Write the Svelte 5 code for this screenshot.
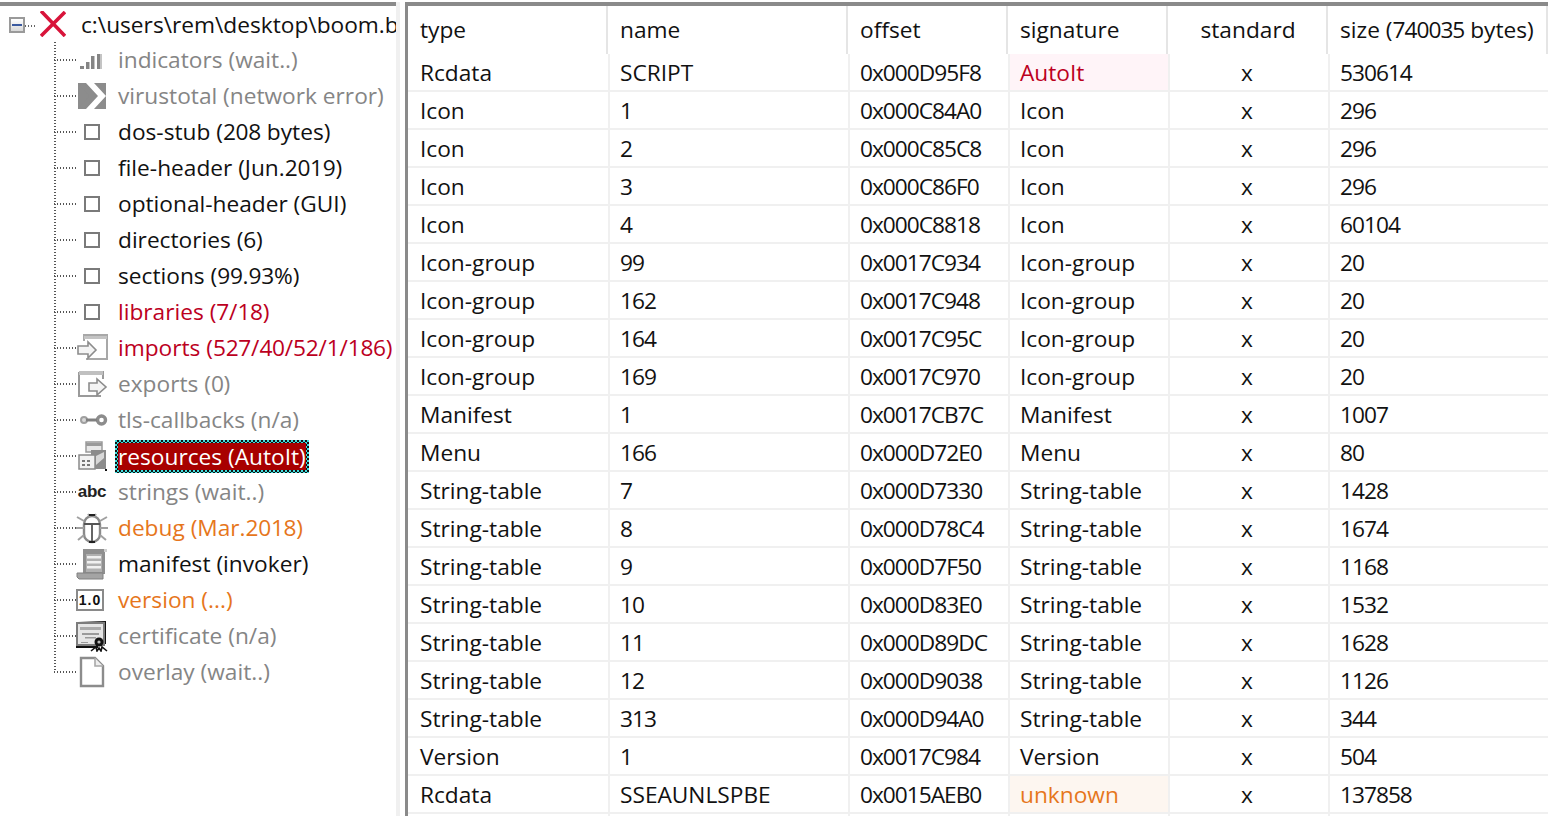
<script>
	const tree = [
		{ icon: 'bars', label: 'indicators (wait..)', tone: 'dim' },
		{ icon: 'vt', label: 'virustotal (network error)', tone: 'dim' },
		{ icon: 'box', label: 'dos-stub (208 bytes)', tone: '' },
		{ icon: 'box', label: 'file-header (Jun.2019)', tone: '' },
		{ icon: 'box', label: 'optional-header (GUI)', tone: '' },
		{ icon: 'box', label: 'directories (6)', tone: '' },
		{ icon: 'box', label: 'sections (99.93%)', tone: '' },
		{ icon: 'box', label: 'libraries (7/18)', tone: 'red' },
		{ icon: 'imports', label: 'imports (527/40/52/1/186)', tone: 'red' },
		{ icon: 'exports', label: 'exports (0)', tone: 'dim' },
		{ icon: 'key', label: 'tls-callbacks (n/a)', tone: 'dim' },
		{ icon: 'res', label: 'resources (AutoIt)', tone: 'selected' },
		{ icon: 'abc', label: 'strings (wait..)', tone: 'dim' },
		{ icon: 'bug', label: 'debug (Mar.2018)', tone: 'orange' },
		{ icon: 'scroll', label: 'manifest (invoker)', tone: '' },
		{ icon: 'ver', label: 'version (...)', tone: 'orange' },
		{ icon: 'cert', label: 'certificate (n/a)', tone: 'dim' },
		{ icon: 'page', label: 'overlay (wait..)', tone: 'dim' }
	];

	const columns = ['type', 'name', 'offset', 'signature', 'standard', 'size (740035 bytes)'];

	const rows = [
		['Rcdata', 'SCRIPT', '0x000D95F8', 'AutoIt', 'x', '530614'],
		['Icon', '1', '0x000C84A0', 'Icon', 'x', '296'],
		['Icon', '2', '0x000C85C8', 'Icon', 'x', '296'],
		['Icon', '3', '0x000C86F0', 'Icon', 'x', '296'],
		['Icon', '4', '0x000C8818', 'Icon', 'x', '60104'],
		['Icon-group', '99', '0x0017C934', 'Icon-group', 'x', '20'],
		['Icon-group', '162', '0x0017C948', 'Icon-group', 'x', '20'],
		['Icon-group', '164', '0x0017C95C', 'Icon-group', 'x', '20'],
		['Icon-group', '169', '0x0017C970', 'Icon-group', 'x', '20'],
		['Manifest', '1', '0x0017CB7C', 'Manifest', 'x', '1007'],
		['Menu', '166', '0x000D72E0', 'Menu', 'x', '80'],
		['String-table', '7', '0x000D7330', 'String-table', 'x', '1428'],
		['String-table', '8', '0x000D78C4', 'String-table', 'x', '1674'],
		['String-table', '9', '0x000D7F50', 'String-table', 'x', '1168'],
		['String-table', '10', '0x000D83E0', 'String-table', 'x', '1532'],
		['String-table', '11', '0x000D89DC', 'String-table', 'x', '1628'],
		['String-table', '12', '0x000D9038', 'String-table', 'x', '1126'],
		['String-table', '313', '0x000D94A0', 'String-table', 'x', '344'],
		['Version', '1', '0x0017C984', 'Version', 'x', '504'],
		['Rcdata', 'SSEAUNLSPBE', '0x0015AEB0', 'unknown', 'x', '137858'],
		['', '', '', '', '', '']
	];

	const sigTone = { AutoIt: 'sig-red', unknown: 'sig-orange' };

	// digits are narrower in the original font, so runs of them get tightened
	const parts = (text) => text.split(/(\d+)/);
	const isDigits = (text) => /^\d/.test(text);
</script>

{#snippet tight(text)}
	{#each parts(text) as part}{#if isDigits(part)}<span class="digits">{part}</span>{:else}{part}{/if}{/each}
{/snippet}

<div class="app">
	<aside class="tree">
		<div class="root">
			<span class="toggle"><span class="minus"></span></span>
			<span class="root-stem"></span>
			<svg class="x" viewBox="0 0 26 26" width="26" height="26"><path d="M1 0 L25 25 M25 1 L1 25" stroke="#d8143a" stroke-width="3.6" fill="none" /></svg>
			<span class="root-label">c:\users\rem\desktop\boom.bin</span>
		</div>
		<ul>
			{#each tree as item}
				<li class="row">
					<span class="stem"></span>
					<span class="icon">
						{#if item.icon === 'box'}
							<span class="box"></span>
						{:else if item.icon === 'abc'}
							<span class="abc">abc</span>
						{:else if item.icon === 'ver'}
							<span class="ver">1.0</span>
						{:else}
							<svg viewBox="0 0 32 32" width="32" height="32">
								{#if item.icon === 'bars'}
									<path d="M4 22h4v3H4zM10 18h3v7h-3zM15 12h3v13h-3zM21 10h3v15h-3z" fill="#858585" />
									<path d="M13 18h1v7h-1zM18 12h1v13h-1zM24 10h2v15h-2z" fill="#c4c4c4" />
								{:else if item.icon === 'vt'}
									<path d="M2 3h28v26H2z" fill="#8c8c8c" />
									<path d="M10 3h8l12 13-12 13h-8l12-13z" fill="#fff" />
									<path d="M2 3h6l12 13L8 29H2l11-13z" fill="#8c8c8c" />
								{:else if item.icon === 'imports'}
									<path d="M8 9V3h23v24H10" fill="#fff" stroke="#a8a8a8" stroke-width="2" />
									<path d="M8 4h23v3H8z" fill="#c4c4c4" />
									<path d="M2 14h10v-4l8 8-8 8v-4H2z" fill="#f4f4f4" stroke="#8c8c8c" stroke-width="1.6" />
								{:else if item.icon === 'exports'}
									<path d="M3 4h24v7M3 4v24h22" fill="#fff" stroke="#9a9a9a" stroke-width="2" />
									<path d="M3 3h24v4H3z" fill="#c0c0c0" />
									<path d="M13 15h8v-4l9 8-9 8v-4h-8z" fill="#f4f4f4" stroke="#8c8c8c" stroke-width="1.6" />
								{:else if item.icon === 'key'}
									<circle cx="25.5" cy="16" r="4" fill="#fff" stroke="#8c8c8c" stroke-width="3.4" />
									<circle cx="8" cy="16" r="3" fill="#d8d8d8" stroke="#a0a0a0" stroke-width="2" />
									<path d="M10 14.5h11v3H10z" fill="#808080" />
								{:else if item.icon === 'res'}
									<path d="M10 2h16v10H10z" fill="#e8e8e8" stroke="#9a9a9a" stroke-width="1.5" />
									<path d="M10 3h16v3H10z" fill="#9a9a9a" />
									<path d="M3 15h16v14H3z" fill="#f2f2f2" stroke="#8a8a8a" stroke-width="1.5" />
									<path d="M6 20h3v2H6zM11 20h3v2h-3zM6 24h3v2H6zM11 24h3v2h-3z" fill="#777" />
									<path d="M15 10h15v19H19V15h-4z" fill="#8c8c8c" />
									<path d="M20 16l8-4v6l-8 7z" fill="#d8d8d8" />
									<path d="M29 29h2v2h-2z" fill="#111" />
								{:else if item.icon === 'bug'}
									<path d="M8 12a8 8 0 0 1 16 0v10a8 8 0 0 1-16 0z" fill="#fff" stroke="#8a8a8a" stroke-width="2.4" />
									<path d="M16 12v17M8 12h16" stroke="#555" stroke-width="1.8" fill="none" />
									<path d="M12 2l2 3M20 2l-2 3M8 9L1 5M24 9l7-4M8 16H0M24 16h8M8 23l-6 5M24 23l6 5" stroke="#a0a0a0" stroke-width="2" fill="none" />
									<path d="M13 2h6v2h-6zM13 29h6v2h-6z" fill="#222" />
								{:else if item.icon === 'scroll'}
									<path d="M7 1h24l-2 3v22H7z" fill="#8f8f8f" />
									<path d="M10 6h16v18H10z" fill="#b0b0b0" />
									<path d="M11 8h14v2.5H11zM11 13h14v2.5H11zM11 18h14v2.5H11z" fill="#f0f0f0" />
									<path d="M1 25h26v6H3l-2-2z" fill="#a4a4a4" stroke="#808080" />
									<path d="M28 1h3v3h-3z" fill="#d0d0d0" />
								{:else if item.icon === 'cert'}
									<path d="M30 1v23h-1V2H2z" fill="#111" />
									<path d="M1 3h27v22H1z" fill="#e6e6e6" stroke="#7c7c7c" stroke-width="2" />
									<path d="M4 7h21v3H4z" fill="#aaa" />
									<path d="M6 13h17v2H6zM9 17h11v1.5H9zM5 22h7v1H5z" fill="#9a9a9a" />
									<path d="M0 26h22v2H0z" fill="#111" />
									<circle cx="23" cy="22" r="4.5" fill="#111" />
									<circle cx="23" cy="22" r="1.6" fill="#bbb" />
									<path d="M15 31l5-4 1 4 2-3 2 3 1-4 5 4" stroke="#111" stroke-width="1.6" fill="none" />
								{:else if item.icon === 'page'}
									<path d="M5 2h14l8 8v20H5z" fill="#fff" stroke="#8c8c8c" stroke-width="2.4" />
									<path d="M19 2v8h8" fill="#eee" stroke="#a8a8a8" stroke-width="1.6" />
								{/if}
							</svg>
						{/if}
					</span>
					<span class="label {item.tone}">{@render tight(item.label)}</span>
				</li>
			{/each}
		</ul>
	</aside>

	<div class="splitter"></div>

	<main class="list">
		<table>
			<colgroup>
				<col style="width: 202px" />
				<col style="width: 240px" />
				<col style="width: 160px" />
				<col style="width: 160px" />
				<col style="width: 160px" />
				<col style="width: 220px" />
			</colgroup>
			<thead>
				<tr>
					{#each columns as col, i}
						<th class:mid={i === 4}>{@render tight(col)}</th>
					{/each}
				</tr>
			</thead>
			<tbody>
				{#each rows as row}
					<tr>
						{#each row as cell, i}
							<td class:mid={i === 4} class:digits={isDigits(cell)} class={i === 3 ? (sigTone[cell] ?? '') : ''}>{cell}</td>
						{/each}
					</tr>
				{/each}
			</tbody>
		</table>
	</main>
</div>

<style>
	:global(body) {
		margin: 0;
		background: #fff;
	}
	.app {
		display: flex;
		width: 1548px;
		height: 816px;
		overflow: hidden;
		padding-top: 2px;
		box-sizing: border-box;
		background: #fff;
		font-family: 'Open Sans', 'Liberation Sans', sans-serif;
		font-size: 22.7px;
		color: #111;
	}
	.digits {
		letter-spacing: var(--digit-gap, -1px);
	}
	.tree {
		flex: 0 0 396px;
		border-top: 4px solid #8a8a8a;
		overflow: hidden;
	}
	.root {
		display: flex;
		align-items: center;
		height: 36px;
		padding: 0 2px 0 9px;
		box-sizing: border-box;
		white-space: nowrap;
		overflow: hidden;
	}
	.toggle {
		flex: none;
		display: flex;
		align-items: center;
		justify-content: center;
		width: 16px;
		height: 16px;
		box-sizing: border-box;
		border: 2px solid #9a9a9a;
		background: linear-gradient(#fff, #d8d8d8);
		margin-top: 2px;
	}
	.minus {
		width: 10px;
		height: 2px;
		background: #3b5aa0;
	}
	.root-stem {
		flex: none;
		width: 12px;
		height: 2px;
		margin: 4px 3px 0 0;
		background: repeating-linear-gradient(to right, #666 0 1px, transparent 1px 3px);
	}
	.x {
		flex: none;
	}
	.root-label {
		margin-left: 15px;
		min-width: 0;
	}
	ul {
		list-style: none;
		margin: 0;
		padding: 0 0 0 54px;
	}
	.row {
		display: flex;
		align-items: center;
		height: 36px;
		white-space: nowrap;
	}
	.stem {
		flex: none;
		align-self: stretch;
		width: 22px;
		background:
			repeating-linear-gradient(to bottom, #555 0 1px, transparent 1px 3px) left top / 2px 100% no-repeat,
			repeating-linear-gradient(to right, #555 0 1px, transparent 1px 3px) left center / 100% 2px no-repeat;
	}
	.row:last-child .stem {
		background:
			repeating-linear-gradient(to bottom, #555 0 1px, transparent 1px 3px) left top / 2px 50% no-repeat,
			repeating-linear-gradient(to right, #555 0 1px, transparent 1px 3px) left center / 100% 2px no-repeat;
	}
	.icon {
		flex: none;
		display: flex;
		align-items: center;
		justify-content: center;
		width: 32px;
		height: 32px;
		background: #fff;
		margin-right: 10px;
	}
	.icon svg {
		display: block;
	}
	.box {
		width: 16px;
		height: 16px;
		box-sizing: border-box;
		border: 2px solid #7a7a7a;
	}
	.abc {
		font-family: 'Liberation Sans', sans-serif;
		font-size: 17px;
		font-weight: 700;
		color: #222;
		letter-spacing: -0.3px;
	}
	.ver {
		width: 28px;
		height: 22px;
		box-sizing: border-box;
		border: 2px solid #8a8a8a;
		font-family: 'Liberation Sans', sans-serif;
		font-size: 14px;
		font-weight: 700;
		line-height: 18px;
		letter-spacing: 1px;
		text-align: center;
		color: #111;
		margin-right: 4px;
	}
	.label {
		--digit-gap: -0.3px;
		display: inline-block;
		line-height: 30px;
	}
	.dim {
		color: #858585;
	}
	.red {
		color: #bc001e;
	}
	.orange {
		color: #e6761c;
	}
	.selected {
		margin-left: -3px;
		line-height: 27px;
		color: #fff;
		border: 3px solid transparent;
		background:
			linear-gradient(#a80000, #a80000) padding-box,
			repeating-conic-gradient(#111 0 25%, #3fdede 0 50%) 0 0 / 4px 4px border-box;
	}
	.splitter {
		flex: 0 0 9px;
		background: linear-gradient(to right, #f0f0f0 0 4px, #fff 4px);
	}
	.list {
		flex: 1;
		min-width: 0;
		border-top: 4px solid #8a8a8a;
		border-left: 3px solid #8a8a8a;
		overflow: hidden;
	}
	table {
		table-layout: fixed;
		width: 1142px;
		border-collapse: separate;
		border-spacing: 0;
	}
	th {
		height: 48px;
		padding: 0 0 2px 10px;
		box-sizing: border-box;
		font-weight: 400;
		text-align: left;
		background: linear-gradient(#e5e5e5, #e5e5e5) no-repeat right 2px top / 2px 100%;
		white-space: nowrap;
		overflow: hidden;
	}
	td {
		height: 38px;
		padding: 0 0 0 10px;
		box-sizing: border-box;
		border-right: 2px solid #f0f0f0;
		border-bottom: 2px solid #f0f0f0;
		white-space: nowrap;
	}
	th:first-child,
	td:first-child {
		padding-left: 12px;
	}
	th.mid,
	td.mid {
		padding-left: 0;
		padding-right: 4px;
		text-align: center;
	}
	.sig-red {
		color: #bc001e;
		background: #fff4f8;
	}
	.sig-orange {
		color: #e6761c;
		background: #fdf6f0;
	}
</style>
